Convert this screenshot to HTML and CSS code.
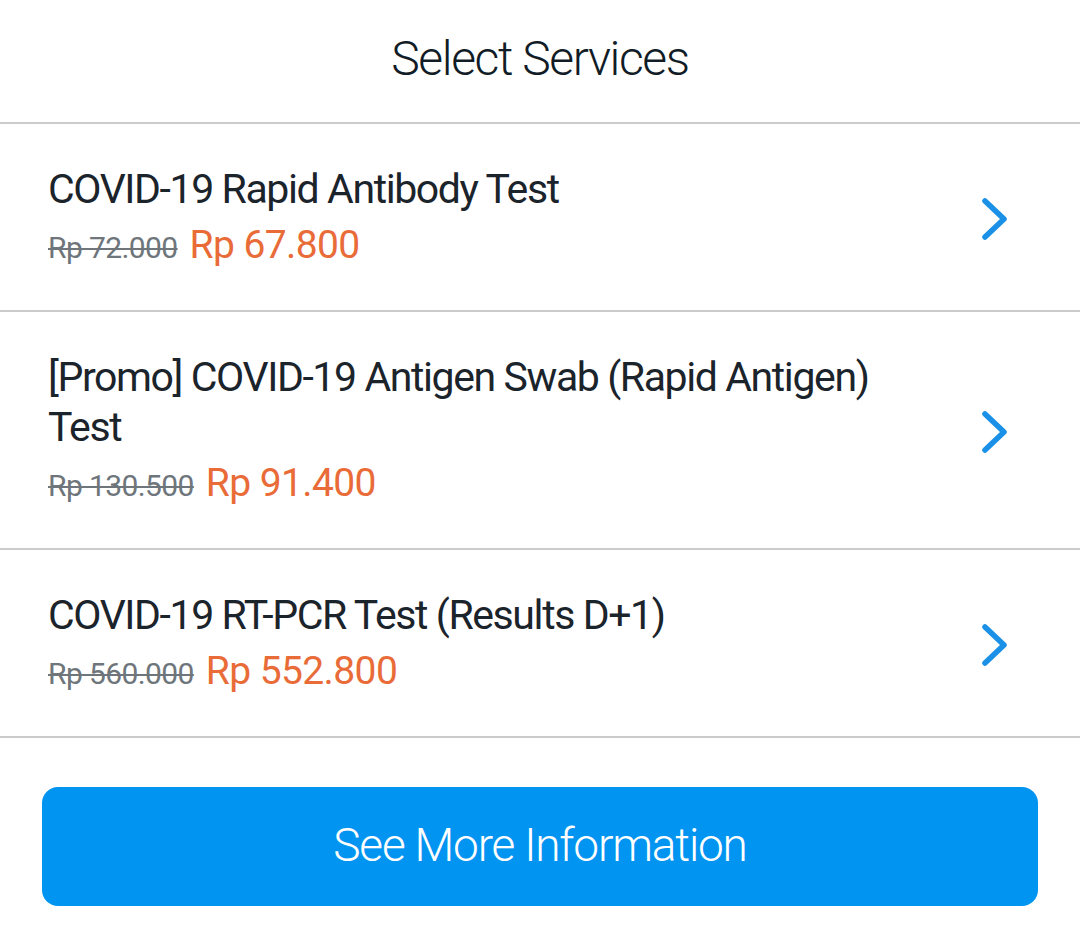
FILE: index.html
```html
<!DOCTYPE html>
<html lang="en">
<head>
<meta charset="utf-8">
<title>Select Services</title>
<link rel="stylesheet" href="styles.css">
</head>
<body>
<div class="sheet">
  <header class="sheet-header">
    <h1 class="sheet-title">Select Services</h1>
  </header>
  <ul class="service-list">
    <li class="service">
      <div class="service-info">
        <div class="service-name">COVID-19 Rapid Antibody Test</div>
        <div class="service-price"><span class="price-old">Rp 72.000</span><span class="price-new">Rp 67.800</span></div>
      </div>
      <svg class="chevron" viewBox="0 0 30 46" width="30" height="46" aria-hidden="true"><polyline points="5,5 24,23 5,41" fill="none" stroke="currentColor" stroke-width="5.5" stroke-linecap="round" stroke-linejoin="round"/></svg>
    </li>
    <li class="service">
      <div class="service-info">
        <div class="service-name">[Promo] COVID-19 Antigen Swab (Rapid Antigen) Test</div>
        <div class="service-price"><span class="price-old">Rp 130.500</span><span class="price-new">Rp 91.400</span></div>
      </div>
      <svg class="chevron" viewBox="0 0 30 46" width="30" height="46" aria-hidden="true"><polyline points="5,5 24,23 5,41" fill="none" stroke="currentColor" stroke-width="5.5" stroke-linecap="round" stroke-linejoin="round"/></svg>
    </li>
    <li class="service">
      <div class="service-info">
        <div class="service-name">COVID-19 RT-PCR Test (Results D+1)</div>
        <div class="service-price"><span class="price-old">Rp 560.000</span><span class="price-new">Rp 552.800</span></div>
      </div>
      <svg class="chevron" viewBox="0 0 30 46" width="30" height="46" aria-hidden="true"><polyline points="5,5 24,23 5,41" fill="none" stroke="currentColor" stroke-width="5.5" stroke-linecap="round" stroke-linejoin="round"/></svg>
    </li>
  </ul>
  <div class="actions">
    <button class="btn-primary" type="button">See More Information</button>
  </div>
</div>
</body>
</html>
```

FILE: styles.css
```css
* { box-sizing: border-box; }

html, body {
  margin: 0;
  padding: 0;
  background: #ffffff;
}

body {
  font-family: Roboto, "Noto Sans", "Liberation Sans", sans-serif;
  color: #1b232b;
}

.sheet {
  width: 1080px;
  min-height: 935px;
  background: #ffffff;
}

.sheet-header {
  height: 124px;
  display: flex;
  align-items: center;
  justify-content: center;
  padding-bottom: 6px;
  border-bottom: 2px solid #cbcbcb;
}

.sheet-title {
  margin: 0;
  font-size: 48px;
  font-weight: 300;
  letter-spacing: -1.4px;
  color: #111c26;
}

.service-list {
  list-style: none;
  margin: 0;
  padding: 0;
}

.service {
  display: flex;
  align-items: center;
  gap: 50px;
  padding: 40px 70px 37px 48px;
  border-bottom: 2px solid #cbcbcb;
}

.service-info {
  flex: 1;
  min-width: 0;
}

.service-name {
  font-size: 41px;
  line-height: 50px;
  letter-spacing: -1.4px;
  color: #1b232b;
}

.service-price {
  margin-top: 6px;
  line-height: 50px;
  display: flex;
  align-items: baseline;
}

.price-old {
  font-size: 30px;
  letter-spacing: -0.6px;
  color: #6e767b;
  text-decoration: line-through;
  text-decoration-thickness: 2px;
  margin-right: 12px;
}

.price-new {
  font-size: 39px;
  letter-spacing: -0.6px;
  color: #e96b38;
}

.chevron {
  flex: none;
  color: #1a90e6;
  display: block;
}

.actions {
  padding: 49px 42px 0;
}

.btn-primary {
  display: block;
  width: 100%;
  height: 119px;
  border: none;
  border-radius: 16px;
  background: #0294f1;
  color: #ffffff;
  font-family: Roboto, "Noto Sans", "Liberation Sans", sans-serif;
  font-size: 46px;
  font-weight: 300;
  letter-spacing: -1.2px;
  padding: 0 0 4px;
  cursor: pointer;
}
```
